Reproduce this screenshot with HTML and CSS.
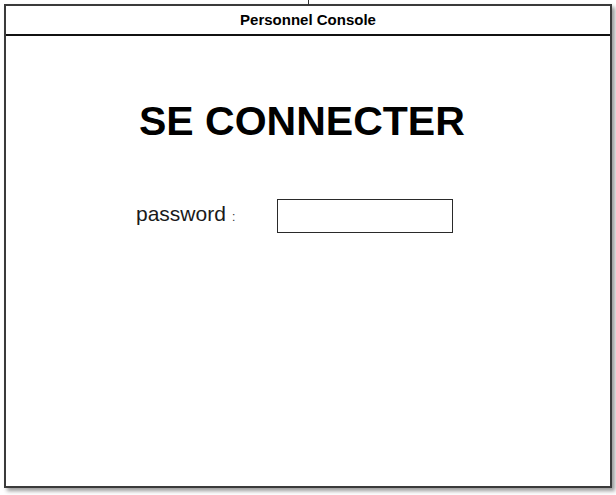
FILE: index.html
```html
<!DOCTYPE html>
<html lang="fr">
<head>
<meta charset="utf-8">
<title>Personnel Console</title>
<link rel="stylesheet" href="styles.css">
</head>
<body>
<div class="tick"></div>
<div class="window">
  <div class="titlebar">Personnel Console</div>
  <div class="content">
    <h1 class="heading">SE CONNECTER</h1>
    <div class="row">
      <label class="label" for="pw">password<span class="colon">:</span></label>
      <input class="field" id="pw" type="password">
    </div>
  </div>
</div>
</body>
</html>
```
FILE: styles.css
```css
html, body {
  margin: 0;
  padding: 0;
  background: #ffffff;
}
body {
  position: relative;
  width: 616px;
  height: 495px;
  overflow: hidden;
  font-family: "Liberation Sans", Arial, sans-serif;
}
.tick {
  position: absolute;
  left: 308px;
  top: 0;
  width: 1px;
  height: 5px;
  background: #333;
}
.window {
  box-sizing: border-box;
  margin: 4px 0 0 4px;
  width: 608px;
  height: 484px;
  border: 2px solid #3a3a3a;
  background: #fff;
  box-shadow: 3px 3px 4px rgba(0, 0, 0, 0.4);
  display: flex;
  flex-direction: column;
}
.titlebar {
  box-sizing: border-box;
  height: 30px;
  border-bottom: 2px solid #111;
  text-align: center;
  font-weight: bold;
  font-size: 15px;
  line-height: 28px;
  color: #000;
}
.content {
  padding-left: 130px;
}
.heading {
  margin: 62px 0 0 3px;
  font-size: 41px;
  line-height: 47px;
  font-weight: bold;
  color: #000;
}
.row {
  margin-top: 54px;
  display: flex;
  align-items: flex-start;
}
.label {
  width: 141px;
  font-size: 21px;
  line-height: 30px;
  color: #1a1a1a;
}
.colon {
  font-size: 12px;
  margin-left: 6px;
  color: #333;
}
.field {
  box-sizing: border-box;
  width: 176px;
  height: 34px;
  margin: 0;
  padding: 0;
  border: 1px solid #2a2a2a;
  background: #fff;
  outline: none;
}
```
